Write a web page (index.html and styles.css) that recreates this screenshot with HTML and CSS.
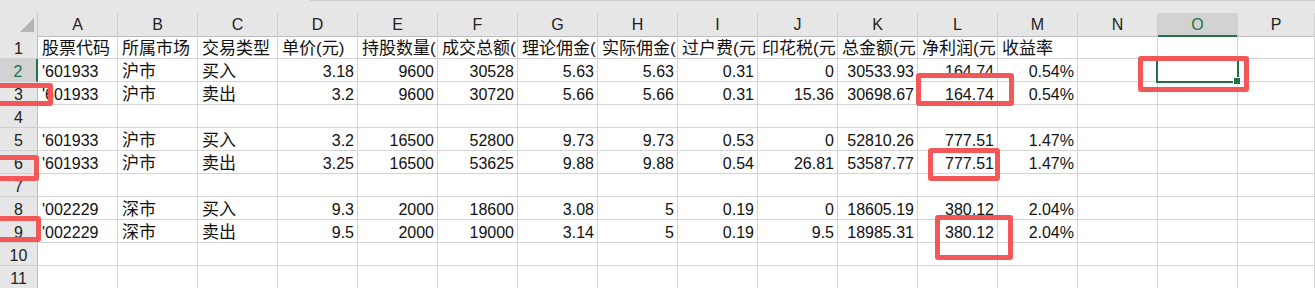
FILE: index.html
```html
<!DOCTYPE html>
<html lang="zh">

<head>
    <meta charset="UTF-8">
    <meta name="viewport" content="width=device-width, initial-scale=1.0">
    <title>股票收益</title>
    <link rel="stylesheet" href="styles.css">
</head>

<body>
    <div class="sheet">
        <!-- 顶部空白条 -->
        <div class="topbar"><div class="topline"></div></div>

        <!-- 列标题 -->
        <div class="row head">
            <div class="corner">
                <svg width="38" height="23" viewBox="0 0 38 23">
                    <polygon points="20 19, 34 19, 34 5" fill="#b4b4b4" />
                </svg>
            </div>
            <div class="ch">A</div><div class="ch">B</div><div class="ch">C</div><div class="ch">D</div>
            <div class="ch">E</div><div class="ch">F</div><div class="ch">G</div><div class="ch">H</div>
            <div class="ch">I</div><div class="ch">J</div><div class="ch">K</div><div class="ch">L</div>
            <div class="ch">M</div><div class="ch">N</div><div class="ch sel-col">O</div><div class="ch">P</div>
        </div>

        <div class="row">
            <div class="rh">1</div>
            <div class="c cn">股票代码</div><div class="c cn">所属市场</div><div class="c cn">交易类型</div>
            <div class="c cn">单价(元)</div><div class="c cn">持股数量(</div><div class="c cn">成交总额(</div>
            <div class="c cn">理论佣金(</div><div class="c cn">实际佣金(</div><div class="c cn">过户费(元</div>
            <div class="c cn">印花税(元</div><div class="c cn">总金额(元</div><div class="c cn">净利润(元</div>
            <div class="c cn">收益率</div><div class="c"></div><div class="c"></div><div class="c"></div>
        </div>

        <div class="row">
            <div class="rh sel-row">2</div>
            <div class="c">'601933</div><div class="c cn">沪市</div><div class="c cn">买入</div>
            <div class="c n">3.18</div><div class="c n">9600</div><div class="c n">30528</div>
            <div class="c n">5.63</div><div class="c n">5.63</div><div class="c n">0.31</div>
            <div class="c n">0</div><div class="c n">30533.93</div><div class="c n">164.74</div>
            <div class="c n">0.54%</div><div class="c"></div><div class="c"></div><div class="c"></div>
        </div>

        <div class="row">
            <div class="rh">3</div>
            <div class="c">'601933</div><div class="c cn">沪市</div><div class="c cn">卖出</div>
            <div class="c n">3.2</div><div class="c n">9600</div><div class="c n">30720</div>
            <div class="c n">5.66</div><div class="c n">5.66</div><div class="c n">0.31</div>
            <div class="c n">15.36</div><div class="c n">30698.67</div><div class="c n">164.74</div>
            <div class="c n">0.54%</div><div class="c"></div><div class="c"></div><div class="c"></div>
        </div>

        <div class="row">
            <div class="rh">4</div>
            <div class="c"></div><div class="c"></div><div class="c"></div><div class="c"></div>
            <div class="c"></div><div class="c"></div><div class="c"></div><div class="c"></div>
            <div class="c"></div><div class="c"></div><div class="c"></div><div class="c"></div>
            <div class="c"></div><div class="c"></div><div class="c"></div><div class="c"></div>
        </div>

        <div class="row">
            <div class="rh">5</div>
            <div class="c">'601933</div><div class="c cn">沪市</div><div class="c cn">买入</div>
            <div class="c n">3.2</div><div class="c n">16500</div><div class="c n">52800</div>
            <div class="c n">9.73</div><div class="c n">9.73</div><div class="c n">0.53</div>
            <div class="c n">0</div><div class="c n">52810.26</div><div class="c n">777.51</div>
            <div class="c n">1.47%</div><div class="c"></div><div class="c"></div><div class="c"></div>
        </div>

        <div class="row">
            <div class="rh">6</div>
            <div class="c">'601933</div><div class="c cn">沪市</div><div class="c cn">卖出</div>
            <div class="c n">3.25</div><div class="c n">16500</div><div class="c n">53625</div>
            <div class="c n">9.88</div><div class="c n">9.88</div><div class="c n">0.54</div>
            <div class="c n">26.81</div><div class="c n">53587.77</div><div class="c n">777.51</div>
            <div class="c n">1.47%</div><div class="c"></div><div class="c"></div><div class="c"></div>
        </div>

        <div class="row">
            <div class="rh">7</div>
            <div class="c"></div><div class="c"></div><div class="c"></div><div class="c"></div>
            <div class="c"></div><div class="c"></div><div class="c"></div><div class="c"></div>
            <div class="c"></div><div class="c"></div><div class="c"></div><div class="c"></div>
            <div class="c"></div><div class="c"></div><div class="c"></div><div class="c"></div>
        </div>

        <div class="row">
            <div class="rh">8</div>
            <div class="c">'002229</div><div class="c cn">深市</div><div class="c cn">买入</div>
            <div class="c n">9.3</div><div class="c n">2000</div><div class="c n">18600</div>
            <div class="c n">3.08</div><div class="c n">5</div><div class="c n">0.19</div>
            <div class="c n">0</div><div class="c n">18605.19</div><div class="c n">380.12</div>
            <div class="c n">2.04%</div><div class="c"></div><div class="c"></div><div class="c"></div>
        </div>

        <div class="row">
            <div class="rh">9</div>
            <div class="c">'002229</div><div class="c cn">深市</div><div class="c cn">卖出</div>
            <div class="c n">9.5</div><div class="c n">2000</div><div class="c n">19000</div>
            <div class="c n">3.14</div><div class="c n">5</div><div class="c n">0.19</div>
            <div class="c n">9.5</div><div class="c n">18985.31</div><div class="c n">380.12</div>
            <div class="c n">2.04%</div><div class="c"></div><div class="c"></div><div class="c"></div>
        </div>

        <div class="row">
            <div class="rh">10</div>
            <div class="c"></div><div class="c"></div><div class="c"></div><div class="c"></div>
            <div class="c"></div><div class="c"></div><div class="c"></div><div class="c"></div>
            <div class="c"></div><div class="c"></div><div class="c"></div><div class="c"></div>
            <div class="c"></div><div class="c"></div><div class="c"></div><div class="c"></div>
        </div>

        <div class="row">
            <div class="rh">11</div>
            <div class="c"></div><div class="c"></div><div class="c"></div><div class="c"></div>
            <div class="c"></div><div class="c"></div><div class="c"></div><div class="c"></div>
            <div class="c"></div><div class="c"></div><div class="c"></div><div class="c"></div>
            <div class="c"></div><div class="c"></div><div class="c"></div><div class="c"></div>
        </div>

        <!-- 选中单元格 O2 -->
        <div class="selection"><span class="handle"></span></div>

        <!-- 红色标注框 -->
        <div class="mark mark-r3"></div>
        <div class="mark mark-l3"></div>
        <div class="mark mark-o2"></div>
        <div class="mark mark-r6"></div>
        <div class="mark mark-l6"></div>
        <div class="mark mark-r9"></div>
        <div class="mark mark-l9"></div>
    </div>
</body>

</html>
```

FILE: styles.css
```css
body {
    margin: 0;
    width: 1315px;
    height: 288px;
    overflow: hidden;
    background: #fff;
    font-family: "Liberation Sans", "Noto Sans CJK SC", sans-serif;
    font-size: 16px;
    color: #111;
}

.sheet {
    position: relative;
    width: 1315px;
}

/* 顶部空白条 */
.topbar {
    height: 13px;
    background: #e6e6e6;
    display: flex;
}

.topline {
    margin-left: 310px;
    flex: 1;
    border-top: 1px solid #cdcdcd;
}

.row {
    display: grid;
    grid-template-columns: 38px repeat(15, 80px) 77px;
    height: 23px;
}

/* 列标题 */
.head {
    background: #e6e6e6;
}

.corner {
    border-right: 1px solid #c6c6c6;
    border-bottom: 1px solid #bdbdbd;
    line-height: 0;
}

.ch {
    box-sizing: border-box;
    border-right: 1px solid #d0d0d0;
    border-bottom: 1px solid #bdbdbd;
    text-align: center;
    padding-top: 3px;
    line-height: 18px;
    color: #222;
}

.ch.sel-col {
    background: #d2d2d2;
    color: #217346;
    border-bottom: 2px solid #217346;
}

/* 行号 */
.rh {
    box-sizing: border-box;
    background: #e6e6e6;
    border-right: 1px solid #bdbdbd;
    border-bottom: 1px solid #d0d0d0;
    text-align: center;
    padding-top: 4px;
    line-height: 18px;
    color: #222;
}

.rh.sel-row {
    background: #d2d2d2;
    color: #217346;
    border-right: 2px solid #217346;
}

/* 单元格 */
.c {
    box-sizing: border-box;
    border-right: 1px solid #d4d4d4;
    border-bottom: 1px solid #d4d4d4;
    padding: 4px 3px 0 4px;
    line-height: 18px;
    white-space: nowrap;
    overflow: hidden;
}

.cn {
    font-size: 17px;
}

.n {
    text-align: right;
}

/* 选中框 */
.selection {
    position: absolute;
    left: 1156px;
    top: 57px;
    width: 83px;
    height: 26px;
    box-sizing: border-box;
    border: 2px solid #217346;
}

.handle {
    position: absolute;
    right: -4px;
    bottom: -4px;
    width: 6px;
    height: 6px;
    background: #217346;
    border: 1px solid #fff;
}

/* 红色标注 */
.mark {
    position: absolute;
    box-sizing: border-box;
    border: 5px solid #f35757;
    border-radius: 3px;
}

.mark-r3 { left: -5px; top: 83px; width: 58px; height: 23px; }
.mark-l3 { left: 916px; top: 73px; width: 98px; height: 33px; }
.mark-o2 { left: 1138px; top: 56px; width: 111px; height: 36px; }
.mark-r6 { left: -5px; top: 155px; width: 44px; height: 26px; }
.mark-l6 { left: 928px; top: 148px; width: 72px; height: 33px; }
.mark-r9 { left: -5px; top: 216px; width: 46px; height: 26px; }
.mark-l9 { left: 935px; top: 215px; width: 78px; height: 45px; }
```
